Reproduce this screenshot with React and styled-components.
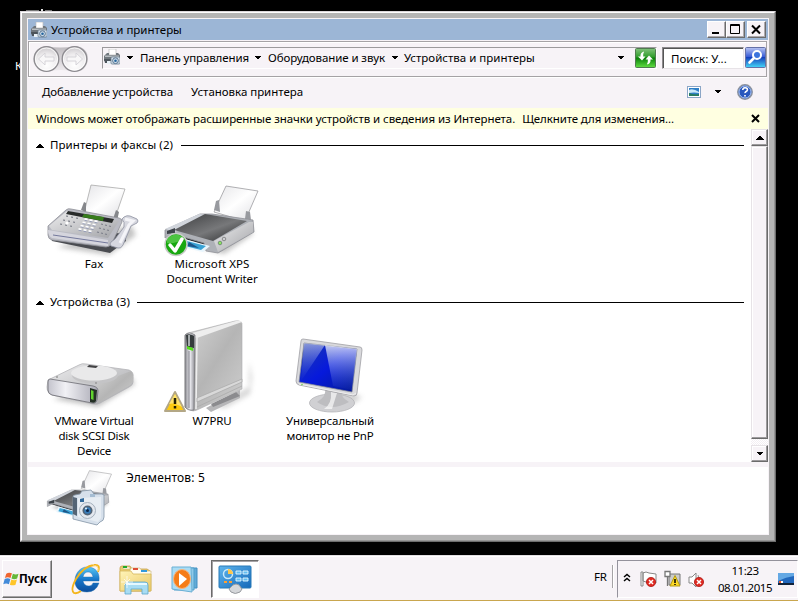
import React from 'react';
import styled, { createGlobalStyle } from 'styled-components';

const Global = createGlobalStyle`
  * { box-sizing: border-box; }
  body { margin: 0; background: #000; overflow: hidden; }
  svg { display: block; flex: none; }
`;
const Desktop = styled.div`
  position: relative; width: 798px; height: 601px; background: #000; color: #000;
  display: flex; flex-direction: column; overflow: hidden;
  font: 11.5px/15px "Noto Sans", sans-serif; white-space: pre;
`;
const DesktopRemnants = styled.svg`position: absolute; left: 0; top: 0;`;
const DesktopLabel = styled.span`position: absolute; left: 15px; top: 58px; color: #fff;`;
const Text = styled.span`
  letter-spacing: ${p => p.$ls || 0}px;
  font-weight: ${p => (p.$bold ? 700 : 400)};
  font-size: ${p => p.$size || 11.5}px;
  margin-left: ${p => p.$ml || 0}px;
  flex: none;
`;
const Window = styled.div`
  position: relative; margin: 11px 0 0 20px; width: 756px; height: 531px; flex: none;
  border: 1px solid; border-color: #dcd8dc #6c6c6c #6c6c6c #dcd8dc; background: #b5b5b5;
  display: flex;
`;
const Bevel = styled.div`
  flex: 1; border: 1px solid; border-color: #fff #959595 #959595 #fff; padding: 5px;
  display: flex;
`;
const Client = styled.div`
  flex: 1; border: 1px solid #f7f3f7; background: #f7f3f7; display: flex; flex-direction: column; min-width: 0;
`;
const TitleBar = styled.div`
  height: 21px; background: #9cb6d6; display: flex; align-items: center; padding: 0 2px 0 3px; flex: none;
`;
const Grow = styled.div`flex: 1;`;
const CaptionButton = styled.div`
  width: 19px; height: 17px; margin-left: ${p => p.$ml || 0}px; background: #f7f3f7;
  border: 1px solid; border-color: #fff #6b6b6b #6b6b6b #fff; box-shadow: inset -1px -1px #aeaaae;
`;
const NavBar = styled.div`
  margin-top: 1px; height: 36px; flex: none; border: 1px solid #a5a2a5;
  box-shadow: inset 1px 1px #fff, 0 1px #fff; display: flex; align-items: flex-start; padding: 3px 0 0 3px;
  width: 739px;
`;
const AddressBar = styled.div`
  margin: 2px 0 0 12px; width: 555px; height: 22px; border: 1px solid; border-color: #9c9a9c #fff #fff #9c9a9c;
  display: flex; align-items: center; padding: 0 0 2px 1px;
`;
const RefreshSlot = styled.div`margin: 2px 0 0 10px;`;
const SearchBox = styled.div`
  margin: 2px 0 0 5px; width: 82px; height: 22px; background: #fff; border: 1px solid;
  border-color: #8c8a8c #e7e3e7 #e7e3e7 #8c8a8c; box-shadow: inset 1px 1px #555; display: flex; align-items: center; padding-left: 8px;
`;
const SearchButton = styled.div`margin: 2px 0 0 1px;`;
const CommandBar = styled.div`height: 31px; flex: none; display: flex; align-items: center; padding: 0 15px 2px 14px;`;
const InfoBar = styled.div`height: 21px; flex: none; background: #ffffe1; display: flex; align-items: center; padding: 0 8px 0 8px;`;
const Body = styled.div`height: 333px; flex: none; background: #fff; display: flex;`;
const List = styled.div`flex: 1; padding: 8px 0 0 7px;`;
const GroupHeader = styled.div`height: 17px; display: flex; align-items: center; padding-right: 7px;`;
const GroupTitle = styled.span`letter-spacing: ${p => p.$ls}px; margin-left: 6px; padding-bottom: 2px;`;
const Rule = styled.div`flex: 1; height: 1px; background: #000; margin-left: ${p => p.$ml}px;`;
const Items = styled.div`display: flex; height: ${p => p.$h}px;`;
const Item = styled.div`width: 118px; display: flex; flex-direction: column; align-items: center;`;
const ItemIcon = styled.div`height: 102px;`;
const ScrollBar = styled.div`
  width: 17px; display: flex; flex-direction: column;
  background: repeating-conic-gradient(#fff 0 25%, #f3eff3 0 50%) 0 0 / 2px 2px;
`;
const ScrollPart = styled.div`
  height: ${p => p.$h}px; margin-top: ${p => p.$mt || 0}px; background: #f7f3f7; border: 1px solid;
  border-color: #e7e3e7 #6b6b6b #6b6b6b #e7e3e7; box-shadow: inset -1px -1px #9c9a9c, inset 1px 1px #fff;
  display: flex; align-items: center; justify-content: center;
`;
const Details = styled.div`flex: 1; margin-top: 5px; background: #fff; display: flex; padding-left: 16px;`;
const DetailsText = styled.div`padding-top: 3px;`;
const TaskBar = styled.div`
  margin-top: 13px; height: 46px; flex: none; background: #f7f3f7; border-top: 1px solid #e3dfe3;
  border-bottom: 1px solid #c9a64e; box-shadow: inset 0 1px #fff; display: flex; padding-top: 4px;
`;
const StartButton = styled.div`
  margin-left: 2px; width: 50px; height: 38px; border: 1px solid; border-color: #fff #6b6b6b #6b6b6b #fff;
  box-shadow: inset -1px -1px #a5a2a5; display: flex; align-items: center; padding-bottom: 1px;
`;
const TaskSlot = styled.div`
  margin-left: ${p => p.$ml}px; width: 48px; height: 38px; border: 1px solid;
  border-color: ${p => (p.$active ? '#6b6b6b #fff #fff #6b6b6b' : 'transparent')};
  background: ${p => (p.$active ? '#fff' : 'none')};
  box-shadow: ${p => (p.$active ? 'inset 1px 1px #a5a2a5' : 'none')};
  display: flex; align-items: center; justify-content: center;
`;
const Divider = styled.div`width: 2px; height: 23px; margin: 5px 0 0 5px; background: #a5a2a5; border-right: 1px solid #fff;`;
const Language = styled.div`height: 38px; padding-top: 9px;`;
const Tray = styled.div`
  margin-left: 3px; width: 181px; height: 38px; border: 1px solid; border-color: #94929c #fff #fff #94929c;
  display: flex; align-items: center; padding-left: 5px;
`;
const Clock = styled.div`width: 56px; margin-left: 12px; display: flex; flex: none; flex-direction: column; align-items: center; line-height: 17px;`;
const ShowDesktop = styled.svg`margin-left: 5px;`;
const HelpIcon = styled.svg`margin-left: 15px;`;
const Arrow = styled.svg`margin-left: ${p => p.$ml}px;`;

const Down = ({ ml = 0, up }) => (
  <Arrow $ml={ml} width="8" height="5" viewBox="0 0 8 5" shapeRendering="crispEdges"><path d={up ? 'M0 4.500L4 .2 8 4.500z' : 'M0 .5L4 4.800 8 .5z'} /></Arrow>
);

const DeviceIcon = () => (
  <svg width="16" height="16" viewBox="0 0 16 16">
    <path d="M5 0h7v6H5z" fill="#fff" stroke="#bbb" strokeWidth=".7" />
    <path d="M1 6l2-2h2v2h7V4h2l2 2v6H0V7z" fill="#70777d" /><path d="M1 6.500h14v1.500H1z" fill="#b9bec2" />
    <path d="M0 10h8v4H1z" fill="#4d555c" /><path d="M3 12h5v3H3z" fill="#e8f1f7" />
    <rect x="7" y="8" width="9" height="7" rx="1" fill="#dfe9f2" stroke="#65788b" strokeWidth=".8" />
    <circle cx="11.500" cy="11.700" r="2.900" fill="#cfdde9" stroke="#587490" /><circle cx="11.500" cy="11.700" r="1.300" fill="#24649d" />
  </svg>
);

const NavButtons = () => (
  <svg width="58" height="30" viewBox="31 45 58 30">
    <defs>
      <radialGradient id="orb" cx=".5" cy=".75" r=".75"><stop offset="0" stopColor="#fff" /><stop offset=".6" stopColor="#eeecee" /><stop offset="1" stopColor="#c9c6ca" /></radialGradient>
      <linearGradient id="saddle" y2="1" x2="0"><stop offset="0" stopColor="#aaa7ab" /><stop offset="1" stopColor="#eeebee" /></linearGradient>
    </defs>
    <path d="M45 46Q59 49 75 46Q87 48 87 59Q86 71 75 72Q59 68 46 72Q33 70 32 59Q33 48 45 46z" fill="url(#saddle)" opacity=".75" />
    {[45.5, 73.5].map(x => <g key={x}><circle cx={x} cy="59" r="12.300" fill="url(#orb)" stroke="#8d8b90" strokeWidth="1.300" /><circle cx={x} cy="59" r="11" fill="none" stroke="#fff" strokeOpacity=".8" /></g>)}
    <path d="M37.500 59l6.500-6v4h9v4h-9v4z" fill="#f8f7f8" stroke="#d2d0d6" strokeWidth=".9" />
    <path d="M81.500 59l-6.500-6v4h-9v4h9v4z" fill="#f8f7f8" stroke="#d2d0d6" strokeWidth=".9" />
  </svg>
);

const Refresh = () => (
  <svg width="21" height="20" viewBox="0 0 21 20">
    <defs><linearGradient id="gr" x2="0" y2="1"><stop stopColor="#82c27c" /><stop offset=".45" stopColor="#2f9d2a" /><stop offset=".5" stopColor="#087f08" /><stop offset="1" stopColor="#62df43" /></linearGradient></defs>
    <rect x=".5" y=".5" width="20" height="19" rx="1" fill="url(#gr)" stroke="#507a50" />
    <path d="M8.500 3.500Q5 5 5.500 8.500H3L7 12.500L10.500 8.500H8.200Q7.800 6 9 4zM12.500 16.500Q16 15 15.500 11.500H18L14 7.500L10.500 11.500H12.800Q13.200 14 12 16z" fill="#fff" />
  </svg>
);
const Search = () => (
  <svg width="21" height="21" viewBox="0 0 21 21">
    <defs><linearGradient id="bl" x2="0" y2="1"><stop stopColor="#b9c5f2" /><stop offset=".45" stopColor="#3c5fd8" /><stop offset=".5" stopColor="#1641bd" /><stop offset="1" stopColor="#45d8f8" /></linearGradient></defs>
    <rect x=".5" y=".5" width="20" height="20" rx="1" fill="url(#bl)" stroke="#6571a7" />
    <circle cx="12" cy="8" r="4" fill="#3c74dd" stroke="#fff" strokeWidth="2" /><path d="M9 11l-4.500 4.500" stroke="#fff" strokeWidth="2.600" strokeLinecap="round" />
  </svg>
);

const Gradients = () => (
  <defs>
    <linearGradient id="paper" x2="1" y2="1"><stop stopColor="#e4e4e7" /><stop offset=".5" stopColor="#fff" /><stop offset="1" stopColor="#dedee2" /></linearGradient>
    <linearGradient id="silver" x2="1" y2="1"><stop stopColor="#eeeeef" /><stop offset="1" stopColor="#a2a3a7" /></linearGradient>
    <linearGradient id="glass" x2="1" y2="1"><stop stopColor="#3b3c3e" /><stop offset=".55" stopColor="#77787a" /><stop offset="1" stopColor="#272829" /></linearGradient>
    <linearGradient id="tower" x2="1" y2="1"><stop stopColor="#d4d4d4" /><stop offset=".5" stopColor="#b5b5b5" /><stop offset="1" stopColor="#d0d0d0" /></linearGradient>
    <linearGradient id="front"><stop stopColor="#88888e" /><stop offset=".5" stopColor="#eeeef3" /><stop offset="1" stopColor="#8a8a90" /></linearGradient>
    <linearGradient id="face"><stop stopColor="#c4c4cd" /><stop offset=".35" stopColor="#f1f1f5" /><stop offset="1" stopColor="#a9a9b4" /></linearGradient>
    <linearGradient id="screen" x2="1" y2="1"><stop stopColor="#1e3cad" /><stop offset=".5" stopColor="#0619dc" /><stop offset="1" stopColor="#061c91" /></linearGradient>
    <linearGradient id="shine" x2="0" y2="1"><stop stopColor="#fff" stopOpacity=".75" /><stop offset="1" stopColor="#5272df" stopOpacity=".05" /></linearGradient>
    <filter id="blur" x="-.5" y="-.5" width="2" height="2"><feGaussianBlur stdDeviation="2.500" /></filter>
  </defs>
);

const FaxIcon = () => (
  <svg width="118" height="104" viewBox="35 153 118 104">
    <Gradients />
    <path d="M57 246l52 8 27-20-5-10z" fill="#888" opacity=".5" filter="url(#blur)" />
    <path d="M84 212l7-28 34 4-10 29z" fill="url(#paper)" stroke="#aaa" strokeWidth=".8" />
    <path d="M81 209l3-8 2 1v9zM113 218l3-9 3 2-2 9z" fill="#85878b" />
    <path d="M50 234l2 6 58 12 16-12v-8z" fill="#494b50" />
    <path d="M48 225l18-16q2-2 5-1l48 9q4 1 3 4l-10 21q-2 4-6 4l-54-7q-4-1-4-5z" fill="#babbc3" stroke="#8f9198" strokeWidth=".8" />
    <path d="M49 225l18-15 52 10-11 17-56-8z" fill="url(#silver)" />
    <path d="M48 229l60 10v6l-56-8q-4-2-4-8z" fill="#d5d5dd" />
    <path d="M53 234l55 8" stroke="#74799c" /><path d="M68 210l46 8-2 4-46-9z" fill="#282b2b" /><path d="M84 213l20 3-1 4-21-4z" fill="#377d1c" />
    {[0, 1, 2, 3].map(r => [0, 1, 2].map(c => <path key={r + '-' + c} d={`M${84.5 + c * 5 - r * 2} ${218 + c + r * 3.300}l3 .6`} stroke="#fff" strokeWidth="1.800" />))}
    {[0, 1, 2, 3].map(r => [0, 1, 2].map(c => <path key={r + 'x' + c} d={`M${84.5 + c * 5 - r * 2} ${219.300 + c + r * 3.300}l3 .6`} stroke="#7e88ae" strokeWidth=".7" />))}
    {[0, 1, 2].map(r => [0, 1, 2].map(c => <path key={r + 'y' + c} d={`M${101 + c * 4 - r * 2} ${223 + c + r * 4}l2 .5M${66 + c * 5 - r * 3} ${215 + c + r * 4}l2 .4`} stroke="#7c7f89" strokeWidth="1.100" />))}
    <circle cx="67" cy="222" r="1.600" fill="#fff" />
    <path d="M124 216q3-2 6-1l7 3q2 2 0 4l-6 3-8 19q-2 4-5 3l-7-2q-2-2 0-4l4-3 9-12q1-5-2-8z" fill="#d6d7df" stroke="#8d90a0" strokeWidth=".8" />
    <path d="M125 218l8 2-4 4-9 18" fill="none" stroke="#f4f4f8" strokeWidth="3" />
  </svg>
);

const PrinterShape = () => (
  <g>
    <path d="M170 238l54 15 29-20-4-10z" fill="#888" opacity=".5" filter="url(#blur)" />
    <path d="M214 211l12-26 32 5-13 30z" fill="url(#paper)" stroke="#9c9c9f" strokeWidth=".8" />
    <path d="M214 209l2-9 3-1 1 12zM245 218l1-8 4 1 1 8z" fill="#989a9f" />
    <path d="M166 232l50 16v-8l-42-15z" fill="#27292d" />
    <path d="M165 229l35-16h12l41 6 1 12-36 21-12-2-2-8-31-9-8 4z" fill="#aeb1b7" stroke="#8f9197" strokeWidth=".8" />
    <path d="M165 228l34-15 10 1-34 17z" fill="#d1d5dc" /><path d="M174 229l31-16 42 7-34 20z" fill="url(#glass)" />
    <path d="M214 240l35-19 4 0v10l-35 20z" fill="url(#silver)" /><path d="M167 230l8-3v5l-8 1z" fill="#3e444a" />
    <path d="M181 237l29 8-7 6-25-6z" fill="#e7f5fd" /><path d="M183 239l23 6-5 4-20-5z" fill="#39a2d5" /><path d="M189 241l10 6-12-2z" fill="#1e5688" />
    <circle cx="220" cy="242" r="1.800" fill="#8be65d" stroke="#67816b" strokeWidth=".8" /><circle cx="224" cy="238" r="1.800" fill="#cecfd2" stroke="#777" strokeWidth=".8" />
  </g>
);
const PrinterIcon = () => (
  <svg width="118" height="104" viewBox="153 153 118 104">
    <PrinterShape />
    <circle cx="176" cy="243.500" r="11" fill="#18a810" stroke="#c9cbc9" strokeWidth="1.500" /><path d="M167 238q9-9 18 0-10 5-18 4z" fill="#62d055" opacity=".7" />
    <path d="M170 244l5 6 7-12" fill="none" stroke="#fff" strokeWidth="3.500" strokeLinejoin="round" strokeLinecap="round" />
  </svg>
);
const DiskIcon = () => (
  <svg width="118" height="104" viewBox="35 310 118 104">
    <path d="M53 398l45 8 37-23-5-9z" fill="#777" opacity=".45" filter="url(#blur)" />
    <path d="M48 379l31-15q3-2 7-1l43 6q5 2 4 7v5q0 3-4 5l-29 16q-3 2-7 1l-41-9q-5-2-5-8z" fill="url(#silver)" stroke="#b4b4b8" strokeWidth=".8" />
    <path d="M97 383l34-13q3 3 2 10-1 4-4 5l-30 17q-3 0 0-8z" fill="url(#tower)" />
    <ellipse cx="95" cy="374.500" rx="23" ry="8" fill="#c4c4c6" /><ellipse cx="94" cy="372" rx="23" ry="7.500" fill="#e9e9ea" />
    <path d="M89 364l9 1-2 2-9-1z" fill="#424244" /><circle cx="57" cy="376" r="1" fill="#999" /><circle cx="96" cy="382" r="1" fill="#999" />
    <path d="M50 378l43 7q5 1 5 5l-1 9q-1 4-5 3l-40-8q-4-1-4-5v-8q0-3 2-3z" fill="url(#face)" stroke="#77777e" strokeWidth=".9" />
    <path d="M90 387l7 2-1 11q-1 3-6 1z" fill="#243025" /><path d="M91 389l2.500 1v9l-2.500-1z" fill="#61d52e" />
  </svg>
);
const TowerIcon = () => (
  <svg width="118" height="104" viewBox="153 310 118 104">
    <path d="M215 406l34-20V360l3 16-2 17-25 14z" fill="#999" opacity=".4" filter="url(#blur)" />
    <path d="M206 407l34-18v8l-29 14z" fill="#b6b6b8" /><path d="M211 403l25-12 4 4-27 11z" fill="#8b8b8e" />
    <path d="M185 335q0-2 3-3l47-12q8-1 7 5v63l-45 21q-4 2-7 0l-5-3z" fill="url(#tower)" stroke="#adadaf" strokeWidth=".6" />
    <path d="M185 334l51-14q5-1 6 1l-45 16z" fill="#eee" />
    <path d="M197 337l-1 71" stroke="#eee" strokeWidth="1.500" /><path d="M197 401l45-20v-3l-45 19zM197 406l45-21" fill="#d9d9d9" stroke="#a8a8a8" strokeWidth=".7" />
    <path d="M185 334q4-4 10 0l-1 75q-6 1-9-3z" fill="url(#front)" stroke="#78787c" strokeWidth=".8" /><path d="M189 350v57" stroke="#6f7078" strokeWidth=".8" />
    <path d="M186 334q4-2 8 1v12l-7-1z" fill="#353b3c" /><path d="M189 334v11" stroke="#ccd2d3" strokeWidth="1.500" /><path d="M187 345l6 2v3l-6-2z" fill="#55df1b" />
    <path d="M175 391l10 19h-20z" fill="#fcca10" stroke="#b3a786" strokeWidth="2" strokeLinejoin="round" /><path d="M175 393l7 13q-8-5-13-3z" fill="#ffe36c" /><path d="M175 397v6M175 405v2.500" stroke="#242000" strokeWidth="2.500" />
  </svg>
);
const MonitorIcon = () => (
  <svg width="118" height="104" viewBox="271 310 118 104">
    <path d="M318 405l36-3 8-6-22-7z" fill="#888" opacity=".4" filter="url(#blur)" />
    <ellipse cx="332" cy="402" rx="22.500" ry="9" fill="#d0d0d3" stroke="#b4b4b8" strokeWidth=".8" /><path d="M325 388l17 2q-2 6 7 11-18 10-32 0 10-6 8-13z" fill="#bdbdc0" /><path d="M331 391q1 12-7 17h8l5-16z" fill="#fff" opacity=".65" />
    <path d="M303 338l57 8q2 0 2 3l-5 43q0 3-3 3l-55-11q-3-1-3-4l5-40q0-2 2-2z" fill="#d9d9dc" stroke="#a0a0a4" strokeWidth=".8" />
    <path d="M304 342l53 6-5 43-53-10z" fill="url(#screen)" stroke="#858992" strokeWidth=".7" />
    <path d="M304 342l21 2-24 36z" fill="url(#shine)" opacity=".65" /><path d="M325 344l32 4-5 41-19-4z" fill="url(#shine)" /><path d="M299 383l54 11 3-2" fill="none" stroke="#eee" />
    <circle cx="302" cy="383.500" r=".8" fill="#6cd34e" />
  </svg>
);
const SummaryIcon = () => (
  <svg width="82" height="66" viewBox="44 467 82 66">
    <g transform="translate(-66.5 343) scale(.69)"><PrinterShape /></g>
    <path d="M73 497q0-2 2-2l5-1 2-3 9-1 3 4 8 0q3 0 2 4v19q0 4-4 5l-3 3-24-6z" fill="#d6e0eb" stroke="#8394a6" strokeWidth=".8" />
    <path d="M73 497l4 1v18l-4-2z" fill="#546475" /><path d="M78 498l23-1v21l-3 4-20-5z" fill="#f0f4f8" opacity=".65" />
    <path d="M80 499l4-1v4h-4z" fill="#31699b" /><path d="M90 494l5 0v3h-5z" fill="#a5bdd3" />
    <circle cx="87.500" cy="510.500" r="8" fill="#e4e8ee" stroke="#a4b0bd" /><circle cx="87.500" cy="510.500" r="5" fill="#536475" /><circle cx="87.500" cy="510.500" r="3.300" fill="#387cba" /><circle cx="87.500" cy="510.500" r="1.500" fill="#0c2749" /><circle cx="86" cy="508.500" r="1" fill="#dff4ff" />
  </svg>
);

const Flag = () => (
  <svg width="16" height="16" viewBox="0 0 17 17">
    <path d="M3.500 3q2.500-2 6-.5L8 7.500q-3-1.500-6 0z" fill="#ef6530" /><path d="M10.500 3q3 1.500 6 0L15 8q-3 1.500-6 0z" fill="#66b839" /><path d="M1.800 8.500q3-1.500 6 0l-1.500 5.500q-3-1.500-6 0z" fill="#438ad9" /><path d="M8.800 9q3 1.500 6 0l-1.500 5.500q-3 1.500-6 0z" fill="#ffc529" />
  </svg>
);
const Explorer = () => (
  <svg width="32" height="32" viewBox="0 0 32 32">
    <defs><linearGradient id="ie" x2="0" y2="1"><stop stopColor="#57c7f4" /><stop offset=".5" stopColor="#1877ca" /><stop offset="1" stopColor="#0c4d9d" /></linearGradient></defs>
    <path fillRule="evenodd" d="M17 4C26 4 30 10 29 18H13q1 5 6 5 3 0 4-3h6q-3 9-12 9C8 29 4 23 5 16 6 9 11 4 17 4zM13 14h10q-1-5-5-5t-5 5z" fill="url(#ie)" stroke="#176bad" strokeWidth=".4" />
    <path d="M28 9Q31 1 24 2 14 3 6 16 0 27 4 30q3 1 7-2" fill="none" stroke="#f4b51c" strokeWidth="1.800" /><path d="M28 8Q29 2 23 3" fill="none" stroke="#ffe08a" />
  </svg>
);
const Folder = () => (
  <svg width="34" height="32" viewBox="0 0 34 32">
    <defs><linearGradient id="fold" x2="1" y2="1"><stop stopColor="#fff4b8" /><stop offset="1" stopColor="#eac865" /></linearGradient></defs>
    <path d="M1 28V5q0-2 2-2h8l2 3h15l3 2v20z" fill="#eacb70" stroke="#c5a04b" strokeWidth=".8" />
    <path d="M11 7l1-2h9l2 3h9v20H11zM4 4h7v2H4z" fill="#fffdf0" stroke="#cbb26b" strokeWidth=".6" /><path d="M4 3h4v2H4z" fill="#20a829" /><path d="M14 5h5v2h-5z" fill="#de4e38" /><path d="M22 7h6v2h-6z" fill="#3199dd" />
    <path d="M1 8h11l2 3h18v17H1z" fill="url(#fold)" stroke="#d5b85d" strokeWidth=".8" />
    <path d="M6 31v-9q0-3 3-3h17q3 0 3 3v9h-6v-5H12v5z" fill="#a8dcf3" stroke="#5ea6cb" strokeWidth=".8" /><path d="M7 21h21" stroke="#e5f8ff" strokeWidth="2" /><path d="M8 13v12M2 19h12M5 16l6 6M11 16l-6 6" stroke="#fff" strokeWidth=".7" />
  </svg>
);
const Player = () => (
  <svg width="28" height="28" viewBox="0 0 28 28">
    <path d="M6 3h20v20H6z" fill="#62aad7" stroke="#438fc0" /><path d="M3 3h20v22H3z" fill="#8fc9e9" stroke="#4f9fcb" /><path d="M1 2h19l1 25-20-3z" fill="#abdcf4" stroke="#6bb0d5" />
    <ellipse cx="11" cy="14" rx="8.500" ry="9.500" fill="#f57c17" stroke="#f8b37a" /><path d="M8 8l8 6-8 7z" fill="#fff" />
  </svg>
);
const ControlPanel = () => (
  <svg width="34" height="30" viewBox="0 0 34 30">
    <defs><linearGradient id="cp" x2="1" y2="1"><stop stopColor="#5fb5ed" /><stop offset="1" stopColor="#1569b9" /></linearGradient></defs>
    <rect x="1" y="2" width="32" height="22" rx="1" fill="url(#cp)" stroke="#287ab8" />
    <circle cx="10" cy="10" r="4.500" fill="none" stroke="#c9e9fb" strokeWidth="1.500" /><path d="M10 10V5a5 5 0 015 5z" fill="#ffc74b" />
    <path d="M18 7h5v3h-5zM25 7h5v3h-5zM18 14h5v3h-5zM25 14h5v3h-5z" fill="#63bdf0" stroke="#e8f8ff" strokeWidth=".9" />
    <path d="M6 17h3v2H6zM11 17h3v2h-3z" fill="#ff9f31" /><path d="M11 25l4-4q3-2 6 0l3 4-2 3q-5 3-9 0z" fill="#d5d7da" stroke="#989ba0" />
  </svg>
);
const TrayIcons = () => (
  <svg width="82" height="20" viewBox="623 569 82 20">
    <path d="M624 577l3-2.500 3 2.500M624 581l3-2.500 3 2.500" stroke="#000" fill="none" strokeWidth="1.500" />
    <path d="M641 586v-14h2v14zM643 573q3-2 6 0l7 1v9h-7l-6-2z" fill="#fff" stroke="#888" />
    <path d="M671 574h9v11h-11v-11z" fill="#cbcbcb" stroke="#777" /><path d="M665 571.500h5v5h-5zM667.500 577v9" fill="#fff" stroke="#777" strokeWidth="1.300" />
    <path d="M675 575.500l5 10.500h-10z" fill="#ffda23" stroke="#b29b14" /><path d="M675 579v4M675 584v1" stroke="#000" strokeWidth="1.500" />
    <path d="M689 577h3l4-4v14l-4-4h-3z" fill="#fff" stroke="#888" /><path d="M698 575q2 3 0 7" fill="none" stroke="#999" />
    {[651, 699].map(x => <g key={x}><circle cx={x} cy="582" r="4.600" fill="#df2a21" stroke="#ad1815" strokeWidth=".8" /><path d={`M${x - 2} 580l4 4M${x + 2} 580l-4 4`} stroke="#fff" strokeWidth="1.500" /></g>)}
  </svg>
);

export default function App() {
  return (
    <Desktop>
      <Global />
      <DesktopRemnants width="60" height="12"><path d="M26 10.500h13M45 10.500h7" stroke="#777" /><path d="M42 9v2" stroke="#ddd" strokeWidth="2" /></DesktopRemnants>
      <DesktopLabel>К</DesktopLabel>
      <Window><Bevel><Client>
        <TitleBar>
          <DeviceIcon /><Text $ml={4}>Устройства и принтеры</Text><Grow />
          <CaptionButton><svg width="17" height="15"><path d="M4 10h7v2H4z" /></svg></CaptionButton>
          <CaptionButton><svg width="17" height="15"><path d="M3.500 2.500h9v9h-9zM3 3.500h10" fill="none" stroke="#000" /></svg></CaptionButton>
          <CaptionButton $ml={2}><svg width="17" height="15"><path d="M4 3.500l8 8M12 3.500l-8 8" stroke="#000" strokeWidth="2" /></svg></CaptionButton>
        </TitleBar>
        <NavBar>
          <NavButtons />
          <AddressBar>
            <DeviceIcon /><Down ml={6} /><Text $ml={6} $ls={-0.11}>Панель управления</Text>
            <Down ml={5} /><Text $ml={6} $ls={-0.09}>Оборудование и звук</Text>
            <Down ml={6} /><Text $ml={5}>Устройства и принтеры</Text>
            <Grow /><Down /><RefreshSlot><Refresh /></RefreshSlot>
          </AddressBar>
          <SearchBox><Text>Поиск: У...</Text></SearchBox>
          <SearchButton><Search /></SearchButton>
        </NavBar>
        <CommandBar>
          <Text $ls={-0.09}>Добавление устройства</Text><Text $ml={18} $ls={-0.03}>Установка принтера</Text><Grow />
          <svg width="14" height="12" viewBox="0 0 14 12"><rect x=".5" y=".5" width="13" height="11" fill="#fff" stroke="#8ba5c6" /><path d="M2 2h10v8H2z" fill="#2f7fc7" /><path d="M2 4q4-2 10 2v1q-5-1-10 0z" fill="#c9e7f8" /><path d="M2 10V7q5 2 10 1v2z" fill="#277b60" /></svg>
          <Down ml={13} />
          <HelpIcon width="16" height="16" viewBox="0 0 16 16"><circle cx="8" cy="8" r="7.200" fill="#2857bd" stroke="#8c929e" strokeWidth="1.500" /><circle cx="8" cy="8" r="6" fill="none" stroke="#a5c0f2" /><path d="M5.700 6Q6 3.500 8.200 3.700q2.500.2 2.200 2.300-.3 1-1.600 1.700-.8.5-.7 1.500M8 11v1.500" fill="none" stroke="#fff" strokeWidth="1.600" /></HelpIcon>
        </CommandBar>
        <InfoBar>
          <Text $ls={-0.07}>Windows может отображать расширенные значки устройств и сведения из Интернета.</Text>
          <Text $ml={7} $ls={-0.12}>Щелкните для изменения...</Text><Grow />
          <svg width="9" height="9" viewBox="0 0 9 9"><path d="M1 1l7 7M8 1L1 8" stroke="#000" strokeWidth="2" /></svg>
        </InfoBar>
        <Body>
          <List>
            <GroupHeader><Down up ml={1} /><GroupTitle $ls={0.07}>Принтеры и факсы (2)</GroupTitle><Rule $ml={8} /></GroupHeader>
            <Items $h={140}>
              <Item><ItemIcon><FaxIcon /></ItemIcon><Text>Fax</Text></Item>
              <Item><ItemIcon><PrinterIcon /></ItemIcon><Text $ls={0.08}>Microsoft XPS</Text><Text $ls={-0.14}>Document Writer</Text></Item>
            </Items>
            <GroupHeader><Down up ml={1} /><GroupTitle $ls={0.09}>Устройства (3)</GroupTitle><Rule $ml={7} /></GroupHeader>
            <Items $h={150}>
              <Item><ItemIcon><DiskIcon /></ItemIcon><Text $ls={-0.22}>VMware Virtual</Text><Text $ls={-0.25}>disk SCSI Disk</Text><Text $ls={-0.24}>Device</Text></Item>
              <Item><ItemIcon><TowerIcon /></ItemIcon><Text $ls={-0.16}>W7PRU</Text></Item>
              <Item><ItemIcon><MonitorIcon /></ItemIcon><Text $ls={-0.08}>Универсальный</Text><Text $ls={-0.17}>монитор не PnP</Text></Item>
            </Items>
          </List>
          <ScrollBar>
            <ScrollPart $h={17}><Down up /></ScrollPart>
            <ScrollPart $h={293} />
            <ScrollPart $h={17} $mt={6}><Down /></ScrollPart>
          </ScrollBar>
        </Body>
        <Details><SummaryIcon /><DetailsText><Text $size={12} $ls={0.16}>Элементов: 5</Text></DetailsText></Details>
      </Client></Bevel></Window>
      <TaskBar>
        <StartButton><Flag /><Text $bold>Пуск</Text></StartButton>
        <TaskSlot $ml={10}><Explorer /></TaskSlot>
        <TaskSlot $ml={2}><Folder /></TaskSlot>
        <TaskSlot $ml={1}><Player /></TaskSlot>
        <TaskSlot $ml={2} $active><ControlPanel /></TaskSlot>
        <Grow />
        <Language><Text>FR</Text></Language><Divider />
        <Tray>
          <TrayIcons />
          <Clock><Text $ls={-0.48}>11:23</Text><Text $ls={-0.48}>08.01.2015</Text></Clock>
          <ShowDesktop width="16" height="14" viewBox="0 0 16 14"><path d="M0 1h16v10H0z" fill="#2268bd" /><path d="M0 1h16v3Q8 5 0 9z" fill="#64a8e4" /><path d="M0 11h16v2H0z" fill="#12233b" /><path d="M1 9h2v2H1z" fill="#f35b2b" /><path d="M3 9h2v2H3z" fill="#fff" /></ShowDesktop>
        </Tray>
      </TaskBar>
    </Desktop>
  );
}
